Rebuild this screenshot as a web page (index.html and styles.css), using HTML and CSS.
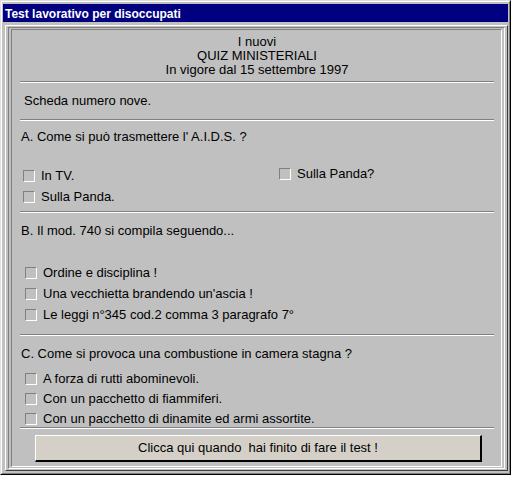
FILE: index.html
```html
<!DOCTYPE html>
<html lang="it">
<head>
<meta charset="utf-8">
<title>Test lavorativo per disoccupati</title>
<link rel="stylesheet" href="styles.css">
</head>
<body>
<div class="window">
  <div class="frame">
    <div class="titlebar">Test lavorativo per disoccupati</div>
    <div class="client">
      <div class="inner">
        <div class="panel">
          <div class="header">
            <div>I nuovi</div>
            <div>QUIZ MINISTERIALI</div>
            <div>In vigore dal 15 settembre 1997</div>
          </div>
          <div class="sep sep-1"></div>
          <div class="scheda">Scheda numero nove.</div>
          <div class="sep sep-2"></div>

          <div class="question q-a">A. Come si può trasmettere l' A.I.D.S. ?</div>
          <div class="options two-col">
            <div class="col">
              <label class="opt opt-a"><span class="box"></span><span>In TV.</span></label>
              <label class="opt opt-a"><span class="box"></span><span>Sulla Panda.</span></label>
            </div>
            <div class="col col-right">
              <label class="opt opt-a"><span class="box"></span><span>Sulla Panda?</span></label>
            </div>
          </div>
          <div class="sep sep-3"></div>

          <div class="question q-b">B. Il mod. 740 si compila seguendo...</div>
          <div class="options list-b">
            <label class="opt"><span class="box"></span><span>Ordine e disciplina !</span></label>
            <label class="opt"><span class="box"></span><span>Una vecchietta brandendo un'ascia !</span></label>
            <label class="opt"><span class="box"></span><span>Le leggi n°345 cod.2 comma 3 paragrafo 7°</span></label>
          </div>
          <div class="sep sep-4"></div>

          <div class="question q-c">C. Come si provoca una combustione in camera stagna ?</div>
          <div class="options list-c">
            <label class="opt"><span class="box"></span><span>A forza di rutti abominevoli.</span></label>
            <label class="opt"><span class="box"></span><span>Con un pacchetto di fiammiferi.</span></label>
            <label class="opt"><span class="box"></span><span>Con un pacchetto di dinamite ed armi assortite.</span></label>
          </div>
          <div class="sep sep-5"></div>

          <button class="submit" type="button">Clicca qui quando&nbsp; hai finito di fare il test !</button>
        </div>
      </div>
    </div>
  </div>
</div>
</body>
</html>
```

FILE: styles.css
```css
html, body {
  margin: 0;
  padding: 0;
  background: #ffffff;
}

body {
  font-family: "Liberation Sans", Arial, sans-serif;
  font-size: 13px;
  line-height: 14px;
  color: #000;
}

.window {
  width: 511px;
  height: 475px;
  box-sizing: border-box;
  border: 1px solid;
  border-color: #dfdfdf #000 #000 #dfdfdf;
  background: #c0c0c0;
}

.frame {
  height: 100%;
  box-sizing: border-box;
  border: 1px solid;
  border-color: #fff #808080 #808080 #fff;
  padding: 2px 1px 1px 1px;
  display: flex;
  flex-direction: column;
}

.titlebar {
  height: 18px;
  box-sizing: border-box;
  background: #000080;
  color: #fff;
  font-weight: bold;
  font-size: 12px;
  line-height: 15px;
  padding: 3px 0 0 2px;
  white-space: nowrap;
}

.client {
  flex: 1;
  margin: 3px 0 1px 2px;
  border: 1px solid;
  border-color: #fff #404040 #404040 #fff;
  padding: 1px 2px 1px 2px;
  display: flex;
  flex-direction: column;
}

.inner {
  flex: 1;
  border: 1px solid;
  border-color: #808080 #fff #fff #808080;
  padding: 1px 2px 1px 2px;
  display: flex;
  flex-direction: column;
}

.panel {
  flex: 1;
  border: 1px solid;
  border-color: #808080 #fff #fff #808080;
  padding: 0 7px 0 8px;
  display: flex;
  flex-direction: column;
}

.header {
  padding-top: 5px;
  text-align: center;
}

.sep {
  height: 0;
  border-top: 1px solid #808080;
  border-bottom: 1px solid #fff;
}

.sep-1 { margin-top: 4px; }
.scheda { margin-top: 11px; padding-left: 4px; }
.sep-2 { margin-top: 11px; }

.question { padding-left: 1px; }
.q-a { margin-top: 9px; }
.q-b { margin-top: 11px; }
.q-c { margin-top: 11px; }

.options {
  display: flex;
  flex-direction: column;
}

.two-col {
  flex-direction: row;
  margin-top: 25px;
}

.two-col .col {
  display: flex;
  flex-direction: column;
  gap: 7px;
}

.two-col .col:first-child {
  width: 256px;
}

.col-right {
  margin-top: -2px;
}

.list-b {
  margin-top: 28px;
  gap: 7px;
}

.list-c {
  margin-top: 11px;
  gap: 6px;
}

.opt {
  display: flex;
  align-items: center;
  height: 14px;
  padding-left: 5px;
  gap: 6px;
  white-space: nowrap;
}

.opt-a {
  padding-left: 3px;
}

.box {
  width: 12px;
  height: 12px;
  box-sizing: border-box;
  border: 1px solid;
  border-color: #808080 #fff #fff #808080;
  background: #c0c0c0;
  flex: none;
}

.sep-3 { margin-top: 7px; }
.sep-4 { margin-top: 12px; }
.sep-5 { margin-top: 1px; }

.submit {
  margin: 6px 12px 0 15px;
  height: 27px;
  box-sizing: border-box;
  background: #d4d0c8;
  border-style: solid;
  border-width: 1px 2px 2px 1px;
  border-color: #fff #000 #000 #fff;
  font-family: "Liberation Sans", Arial, sans-serif;
  font-size: 13px;
  line-height: 14px;
  color: #000;
  padding: 0;
}
```
